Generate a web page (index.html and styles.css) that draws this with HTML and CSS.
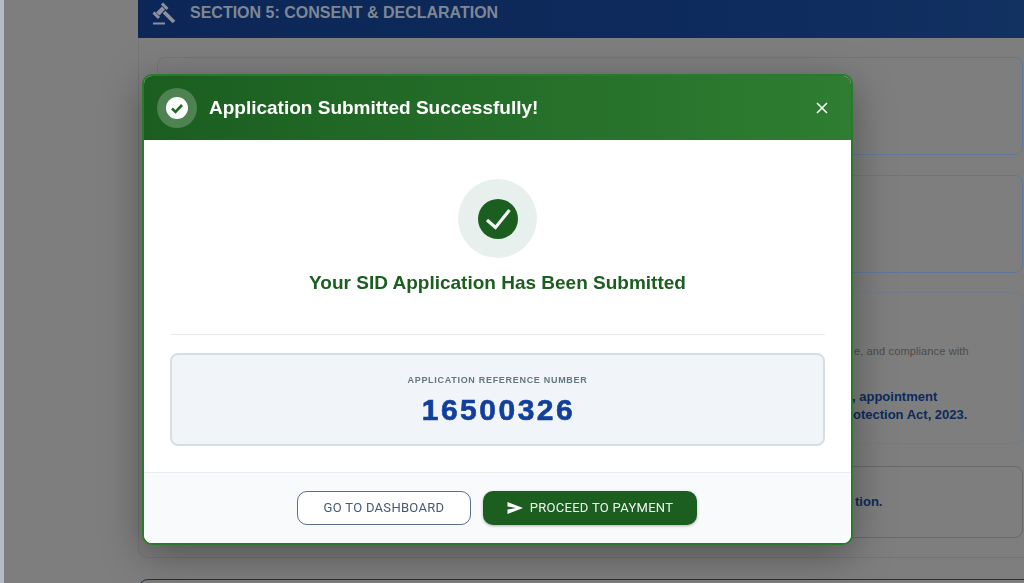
FILE: index.html
```html
<!DOCTYPE html>
<html lang="en">
<head>
<meta charset="utf-8">
<title>Application Submitted</title>
<link rel="stylesheet" href="styles.css">
</head>
<body>
<div class="page">
  <section class="card">
    <header class="card-head">
      <svg class="gavel" viewBox="0 0 26 26" aria-hidden="true">
        <path d="M11 2.500l5.500 5.500M2.500 11.500l5.500 5.500" stroke="#8b919c" stroke-width="3" fill="none"/>
        <path d="M11 5.500l-6 6 3.500 3 5.500-6z" fill="#8b919c"/>
        <path d="M13 11l10 10" stroke="#8b919c" stroke-width="3.800" fill="none"/>
        <path d="M2 22.500h12" stroke="#8b919c" stroke-width="2" fill="none"/>
      </svg>
      <h2 class="card-title">SECTION 5: CONSENT &amp; DECLARATION</h2>
    </header>
    <div class="card-body">
      <div class="box box-a"></div>
      <div class="box box-a"></div>
      <div class="box box-b">
        <p class="note">e, and compliance with</p>
        <p class="strong line-1">, appointment</p>
        <p class="strong line-2">otection Act, 2023.</p>
      </div>
      <div class="box box-c">
        <p class="strong line-3">tion.</p>
      </div>
    </div>
  </section>
  <section class="card-next"></section>
</div>

<div class="modal-layer">
  <div class="modal">
    <header class="modal-head">
      <span class="head-icon">
        <svg viewBox="0 0 22 22" width="22" height="22" aria-hidden="true">
          <circle cx="11" cy="11" r="11" fill="#fff"/>
          <path d="M6 11.500l3.500 3.500 6.500-7" stroke="#1f6a25" stroke-width="2.600" fill="none"/>
        </svg>
      </span>
      <h1 class="modal-title">Application Submitted Successfully!</h1>
      <svg class="close" viewBox="0 0 12 12" width="12" height="12" aria-hidden="true">
        <path d="M1 1l10 10M11 1L1 11" stroke="#f1f4f1" stroke-width="1.700" fill="none"/>
      </svg>
    </header>
    <div class="modal-body">
      <div class="halo">
        <svg viewBox="0 0 40 40" width="40" height="40" aria-hidden="true">
          <circle cx="20" cy="20" r="20" fill="#1b5e20"/>
          <path d="M9 21l8.500 7.500L31.500 11" stroke="#f2f5f2" stroke-width="3.200" fill="none"/>
        </svg>
      </div>
      <h2 class="done">Your SID Application Has Been Submitted</h2>
      <hr class="rule">
      <div class="ref">
        <div class="ref-label">APPLICATION REFERENCE NUMBER</div>
        <div class="ref-num">16500326</div>
      </div>
    </div>
    <footer class="modal-foot">
      <button class="btn btn-ghost">GO TO DASHBOARD</button>
      <button class="btn btn-solid">
        <svg viewBox="0 0 16 12" width="16" height="12" aria-hidden="true">
          <path d="M0.500 0L16 6 0.500 12l0-4.500L9 6 0.500 4.500z" fill="#fff"/>
        </svg>
        PROCEED TO PAYMENT
      </button>
    </footer>
  </div>
</div>
</body>
</html>
```

FILE: styles.css
```css
* { box-sizing: border-box; }
html, body { margin: 0; height: 100%; overflow: hidden; }
body {
  background: #b4bac6;
  padding-left: 4px;
  font-family: "Liberation Sans", Arial, sans-serif;
}
.page {
  height: 583px;
  background: #7e7e7e;
  padding-left: 134px;
  overflow: hidden;
}
.card {
  width: 900px;
  height: 558px;
  border: 1px solid #747474;
  border-top: 0;
  border-radius: 0 0 10px 10px;
}
.card-head {
  height: 38px;
  margin: 0 -1px;
  background: linear-gradient(90deg, #0c2757, #0d2a5c 60%, #123262);
  display: flex;
  align-items: flex-start;
  padding: 0 0 0 13px;
}
.gavel { width: 26px; height: 26px; margin-top: 1px; flex: none; }
.card-title {
  margin: 4px 0 0 13px;
  color: #7f8794;
  font-size: 16px;
  line-height: 18px;
  font-weight: 700;
}
.card-body {
  padding: 19px 0 0 18px;
  display: flex;
  flex-direction: column;
}
.box {
  width: 866px;
  border-radius: 8px;
  position: relative;
}
.box-a {
  height: 98px;
  border: 1px solid #62779a;
  margin-bottom: 19.500px;
}
.box-b {
  height: 152px;
  border: 1px solid #727c88;
  margin-bottom: 22px;
  padding: 52px 0 0 692px;
}
.box-c {
  height: 72px;
  border: 1px solid #686868;
  padding: 26px 0 0 697px;
}
.note, .strong { margin: 0; white-space: nowrap; }
.note { margin-left: 4px; font-size: 11px; line-height: 12px; letter-spacing: .13px; color: #4c4c4c; }
.strong { font-size: 13px; font-weight: 700; color: #0d2a5c; line-height: 18px; }
.line-1 { margin: 31px 0 0 2px; }
.line-2 { margin-left: 3px; }
.card-next {
  width: 900px;
  height: 80px;
  margin-top: 21px;
  border: 1px solid #123262;
  border-radius: 10px;
}

.modal-layer {
  position: fixed;
  inset: 0;
  padding: 74px 0 0 142px;
}
.modal {
  width: 711px;
  height: 471px;
  border: 2px solid #2a7a2e;
  border-radius: 10px;
  overflow: hidden;
  background: #fff;
  display: flex;
  flex-direction: column;
  box-shadow: 0 10px 40px rgba(0, 0, 0, .35);
}
.modal-head {
  height: 64px;
  flex: none;
  background: linear-gradient(90deg, #1b5e20, #2e7d32);
  display: flex;
  align-items: center;
  padding: 0 23px 0 13px;
}
.head-icon {
  width: 40px;
  height: 40px;
  border-radius: 50%;
  background: rgba(255, 255, 255, .22);
  display: flex;
  align-items: center;
  justify-content: center;
  flex: none;
}
.modal-title {
  flex: 1;
  margin: 0 0 0 12px;
  color: #fff;
  font-size: 19px;
  line-height: 22px;
  font-weight: 700;
}
.modal-body {
  flex: 1;
  padding: 39px 26px 0;
  display: flex;
  flex-direction: column;
  align-items: center;
}
.halo {
  width: 79px;
  height: 79px;
  border-radius: 50%;
  background: #e8f0ee;
  display: flex;
  align-items: center;
  justify-content: center;
  flex: none;
}
.done {
  margin: 14px 0 0;
  color: #1b5e20;
  font-size: 19px;
  line-height: 22px;
  font-weight: 700;
}
.rule {
  align-self: stretch;
  margin: 40px 0 0;
  border: 0;
  border-top: 1px solid #e8eceb;
}
.ref {
  align-self: stretch;
  margin-top: 18px;
  height: 93px;
  background: #f1f4f9;
  border: 2px solid #d4dfe4;
  border-radius: 8px;
  text-align: center;
  padding-top: 19px;
}
.ref-label {
  color: #64787c;
  font-size: 9px;
  line-height: 12px;
  font-weight: 700;
  letter-spacing: .7px;
}
.ref-num {
  margin-top: 9px;
  padding-left: 2px;
  color: #123f9c;
  font-size: 30px;
  line-height: 30px;
  font-weight: 700;
  letter-spacing: 2.500px;
  -webkit-text-stroke: .6px #123f9c;
}
.modal-foot {
  height: 71px;
  flex: none;
  background: #f8fafb;
  border-top: 1px solid #e9edf3;
  display: flex;
  justify-content: center;
  gap: 12px;
  padding: 18px 1px 0 0;
}
.btn {
  height: 34px;
  border-radius: 10px;
  font-family: Roboto, "Liberation Sans", sans-serif;
  font-size: 13px;
  letter-spacing: .3px;
  display: flex;
  align-items: center;
  justify-content: center;
  padding: 0 0 1px;
}
.btn-ghost {
  width: 174px;
  background: #fff;
  border: 1px solid #56708c;
  color: #45597a;
}
.btn-solid {
  width: 214px;
  gap: 7px;
  background: #1b5e20;
  border: 0;
  color: #f2f5f2;
  box-shadow: 0 1px 3px rgba(0, 0, 0, .3);
}
```
